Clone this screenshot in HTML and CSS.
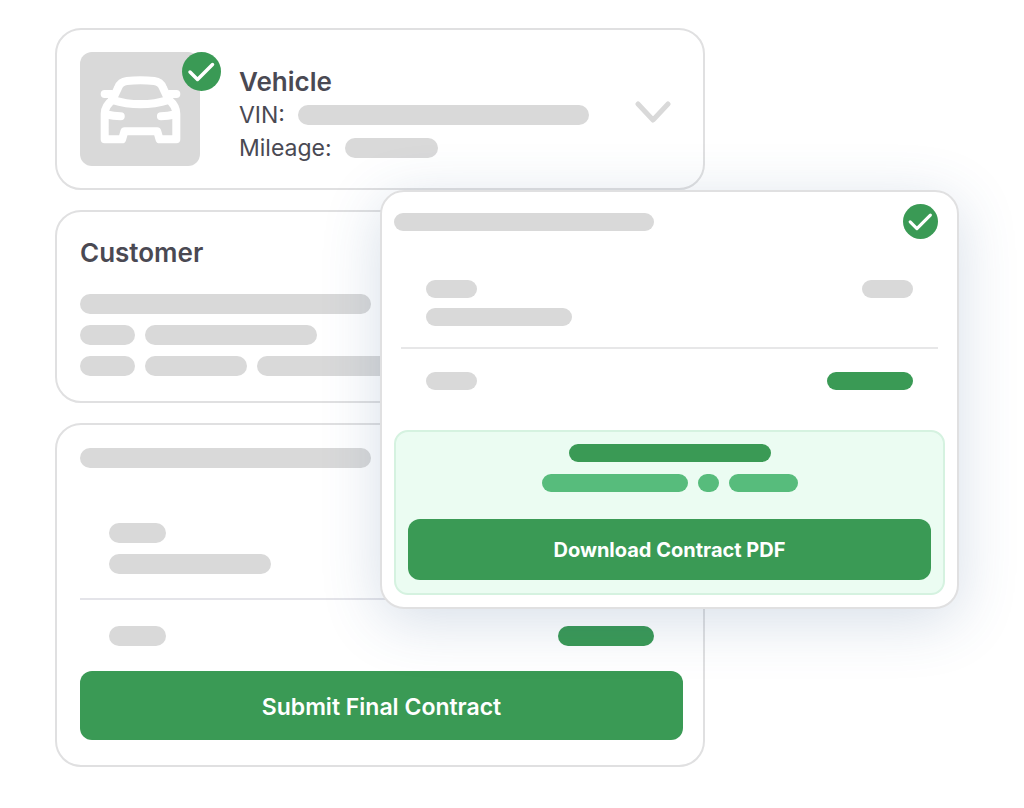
FILE: index.html
```html
<!DOCTYPE html>
<html lang="en">
<head>
<meta charset="utf-8">
<meta name="viewport" content="width=device-width, initial-scale=1">
<title>Contract</title>
<link rel="stylesheet" href="styles.css">
</head>
<body>
<main class="scene">
  <div class="stack">
    <section class="card vehicle">
      <div class="thumb">
        <svg class="car" viewBox="0 0 242 206" fill="none" stroke="#fff" stroke-width="24" stroke-linecap="round" stroke-linejoin="round" aria-hidden="true">
          <path d="M40 68 L54 38 Q61 20 80 18 Q121 13 162 18 Q181 20 188 38 L202 68"/>
          <path d="M36 74 Q121 100 206 74"/>
          <path d="M14 57 H34 M208 57 H228"/>
          <path d="M38 74 Q14 92 14 116 V192 H66 L73 168 H171 L178 192 H228 V116 Q228 92 206 74"/>
          <path d="M20 118 Q40 123 62 123 M223 118 Q203 123 182 123"/>
        </svg>
        <svg class="badge" viewBox="0 0 39 39" fill="none" aria-hidden="true">
          <circle cx="19.5" cy="19.5" r="19.5" fill="#3a9a55"/>
          <path d="M8 20 L15.5 27.5 L30.5 12.5" stroke="#fff" stroke-width="3.5" stroke-linecap="round" stroke-linejoin="round"/>
        </svg>
      </div>
      <div class="details">
        <h2 class="title">Vehicle</h2>
        <p class="field"><span class="label">VIN:</span><span class="bar w291"></span></p>
        <p class="field"><span class="label">Mileage:</span><span class="bar w93"></span></p>
      </div>
      <button class="toggle" type="button" aria-label="Expand vehicle">
        <svg class="chevron" viewBox="0 0 36 24" fill="none" stroke="#d9d9d9" stroke-width="5" stroke-linecap="round" stroke-linejoin="round" aria-hidden="true"><path d="M3 4 L18 20 L33 4"/></svg>
      </button>
    </section>

    <section class="card customer">
      <h2 class="title">Customer</h2>
      <div class="lines">
        <div class="row"><span class="bar w291"></span></div>
        <div class="row"><span class="bar w55"></span><span class="bar w172"></span></div>
        <div class="row"><span class="bar w55"></span><span class="bar w102"></span><span class="bar w172"></span></div>
      </div>
    </section>

    <section class="card contract">
      <span class="bar w291"></span>
      <div class="lines items">
        <span class="bar w57"></span>
        <span class="bar w162"></span>
      </div>
      <hr class="rule">
      <div class="total">
        <span class="bar w57"></span>
        <span class="bar w96 green"></span>
      </div>
      <button class="action" type="button">Submit Final Contract</button>
    </section>
  </div>

  <section class="panel">
    <header class="panel-head">
      <span class="bar w260"></span>
      <svg class="done" viewBox="0 0 39 39" fill="none" aria-hidden="true">
        <circle cx="19.5" cy="19.5" r="19.5" fill="#3a9a55"/>
        <path d="M8 20 L15.5 27.5 L30.5 12.5" stroke="#fff" stroke-width="3.5" stroke-linecap="round" stroke-linejoin="round"/>
      </svg>
    </header>
    <div class="panel-items">
      <div class="split"><span class="bar w51"></span><span class="bar w51"></span></div>
      <span class="bar w146"></span>
    </div>
    <hr class="rule panel-rule">
    <div class="split panel-total"><span class="bar w51"></span><span class="bar w86 green"></span></div>
    <div class="notice">
      <span class="bar w202 green"></span>
      <div class="row"><span class="bar w146 mint"></span><span class="bar w21 mint"></span><span class="bar w69 mint"></span></div>
      <button class="action download" type="button">Download Contract PDF</button>
    </div>
  </section>
</main>
</body>
</html>
```

FILE: styles.css
```css
* { box-sizing: border-box; }

body {
  margin: 0;
  background: #fff;
  color: #4a4953;
  font-family: Inter, "Liberation Sans", sans-serif;
}

.scene {
  display: grid;
  grid-template-columns: 325fr 325fr 254fr;
  align-items: start;
  padding: 28px 65px 40px 55px;
}

.stack {
  grid-area: 1 / 1 / 2 / 3;
  display: grid;
  gap: 20px;
}

.card {
  border: 2px solid #e0e0e1;
  border-radius: 26px;
  padding: 22px 20px 22px 23px;
  background: #fff;
}

.bar {
  display: block;
  height: 20px;
  border-radius: 10px;
  background: #d9d9d9;
}
.green { background: #3a9a55; }
.mint { background: #57bc7c; }

.w21 { width: 21px; }
.w51 { width: 51px; }
.w55 { width: 55px; }
.w57 { width: 57px; }
.w69 { width: 69px; }
.w86 { width: 86px; }
.w93 { width: 93px; }
.w96 { width: 96px; }
.w102 { width: 102px; }
.w146 { width: 146px; }
.w162 { width: 162px; }
.w172 { width: 172px; }
.w202 { width: 202px; }
.w260 { width: 260px; }
.w291 { width: 291px; }

.title {
  margin: 0;
  font-size: 26px;
  font-weight: 600;
  line-height: 33px;
}

.vehicle { display: flex; }

.thumb {
  position: relative;
  display: grid;
  place-items: center;
  width: 120px;
  height: 114px;
  border-radius: 12px;
  background: #d9d9d9;
}
.car { width: 81px; height: 69px; }
.badge {
  position: absolute;
  top: 0;
  right: -21px;
  width: 39px;
  height: 39px;
}

.details {
  flex: 1;
  padding: 13px 0 0 39px;
}
.field {
  display: flex;
  align-items: center;
  gap: 13px;
  margin: 0;
  font-size: 23px;
  line-height: 33px;
}
.label { padding-top: 2px; line-height: 31px; }

.toggle {
  align-self: center;
  margin-right: 12px;
  padding: 6px 0 0;
  border: 0;
  background: none;
}
.chevron {
  display: block;
  width: 36px;
  height: 24px;
}

.customer { padding-top: 24px; padding-bottom: 25px; }
.customer .lines { margin-top: 25px; }
.lines { display: grid; gap: 11px; }
.row { display: flex; gap: 10px; }

.contract { padding-top: 23px; padding-bottom: 25px; }
.items { padding: 55px 29px 24px; }
.rule {
  height: 2px;
  margin: 0;
  border: 0;
  background: #e4e4e9;
}
.total {
  display: flex;
  justify-content: space-between;
  padding: 26px 29px 25px;
}

.action {
  display: block;
  width: 100%;
  padding: 21px 16px 17px;
  border: 0;
  border-radius: 12px;
  background: #3a9a55;
  color: #fff;
  font: 600 23px/31px Inter, "Liberation Sans", sans-serif;
}

.panel {
  grid-area: 1 / 2 / 2 / 4;
  margin-top: 162px;
  padding: 12px;
  border: 2px solid #e0e0e1;
  border-radius: 24px;
  background: #fff;
  box-shadow: 0 12px 60px rgba(50, 90, 140, 0.2);
}
.panel .bar { height: 18px; border-radius: 9px; }

.panel-head {
  display: flex;
  align-items: center;
  justify-content: space-between;
  padding-right: 7px;
}
.done { width: 35px; height: 35px; }

.split { display: flex; justify-content: space-between; }
.panel-items {
  display: grid;
  gap: 10px;
  padding: 41px 32px 21px;
}
.panel-rule { margin: 0 7px; background: #e7e7e8; }
.panel-total { padding: 23px 32px 40px; }

.notice {
  display: grid;
  justify-items: center;
  gap: 12px;
  padding: 12px 12px 13px;
  border: 2px solid #d5f2e0;
  border-radius: 14px;
  background: #ebfcf2;
}
.download {
  margin-top: 15px;
  padding: 16px 15px 14px;
  font-size: 20px;
  font-weight: 700;
}
```
